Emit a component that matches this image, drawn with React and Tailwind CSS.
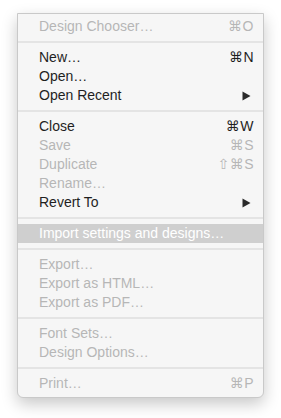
const groups = [
  [{ label: "Design Chooser…", key: "⌘O", off: true }],
  [
    { label: "New…", key: "⌘N" },
    { label: "Open…" },
    { label: "Open Recent", sub: true },
  ],
  [
    { label: "Close", key: "⌘W" },
    { label: "Save", key: "⌘S", off: true },
    { label: "Duplicate", key: "⇧⌘S", off: true },
    { label: "Rename…", off: true },
    { label: "Revert To", sub: true },
  ],
  [{ label: "Import settings and designs…", off: true, hot: true }],
  [
    { label: "Export…", off: true },
    { label: "Export as HTML…", off: true },
    { label: "Export as PDF…", off: true },
  ],
  [
    { label: "Font Sets…", off: true },
    { label: "Design Options…", off: true },
  ],
  [{ label: "Print…", key: "⌘P", off: true }],
];

function Row({ item }) {
  let color = item.off ? "text-[#b6b6b6]" : "text-[#1f1f1f]";
  if (item.hot) color = "text-white bg-[#cfcfcf]";
  return (
    <div className={`flex h-[19px] items-center justify-between pl-[21px] pr-[9px] ${color}`}>
      <span>{item.label}</span>
      {item.key && <span className="tracking-[0.5px]">{item.key}</span>}
      {item.sub && (
        <svg width="9" height="10" viewBox="0 0 9 10" className="mr-[3px]">
          <path d="M0.5 0.5 L8.5 5 L0.5 9.5 Z" fill="#2a2a2a" />
        </svg>
      )}
    </div>
  );
}

export default function App() {
  return (
    <div className="min-h-[418px] w-[281px] bg-white pl-[17px] pt-[13px]">
      <div
        className="w-[247px] rounded-b-[6px] border border-[#c9c9c9] bg-[#f6f6f6] pb-[4px] pt-[3px] text-[14px] leading-[19px] shadow-[0_6px_16px_rgba(0,0,0,0.22)]"
        style={{ fontFamily: '"Liberation Sans", "DejaVu Sans", sans-serif' }}
      >
        {groups.map((g, i) => (
          <div key={i}>
            {i > 0 && (
              <div className="flex h-[12px] items-center">
                <div className="h-[2px] w-full bg-[#e4e4e4]" />
              </div>
            )}
            {g.map((item) => (
              <Row key={item.label} item={item} />
            ))}
          </div>
        ))}
      </div>
    </div>
  );
}
